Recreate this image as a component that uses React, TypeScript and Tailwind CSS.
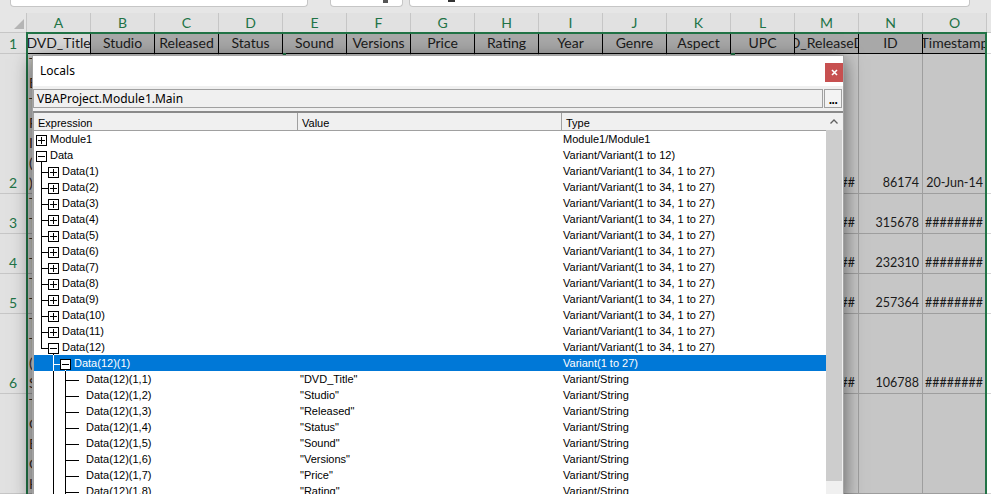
import React from "react";

const COLS = ["A","B","C","D","E","F","G","H","I","J","K","L","M","N","O"];
const HDR = ["DVD_Title","Studio","Released","Status","Sound","Versions","Price","Rating","Year","Genre","Aspect","UPC","DVD_ReleaseDate","ID","Timestamp"];

type SRow = { n: string; h: string; a: string[]; m?: string; nn?: string; o?: string; top?: boolean };
const SROWS: SRow[] = [
  { n: "2", h: "h-[140px]", a: ["The", "Easy", "The", "Fox", "In", "(2)", ")"], m: "########", nn: "86174", o: "20-Jun-14" },
  { n: "3", h: "h-[40px]", a: ["The", "The"], m: "########", nn: "315678", o: "########" },
  { n: "4", h: "h-[40px]", a: ["The", "The"], m: "########", nn: "232310", o: "########" },
  { n: "5", h: "h-[40px]", a: ["The", "The"], m: "########", nn: "257364", o: "########" },
  { n: "6", h: "h-[80px]", a: ["The", "The", "(S)", "So"], m: "########", nn: "106788", o: "########" },
  { n: "", h: "h-[100px]", a: ["The", "Cat", "Eve", "Cat", "Hi"], top: true },
];

type TRow = {
  level: number;
  box?: "plus" | "minus";
  below?: boolean;
  full: number[];
  top?: number;
  conn?: [number, number];
  expr: string;
  val?: string;
  type: string;
  sel?: boolean;
};

const NAMES = ["DVD_Title","Studio","Released","Status","Sound","Versions","Price","Rating"];
const TROWS: TRow[] = [
  { level: 0, box: "plus", full: [], expr: "Module1", type: "Module1/Module1" },
  { level: 0, box: "minus", below: true, full: [], expr: "Data", type: "Variant/Variant(1 to 12)" },
  ...Array.from({ length: 11 }, (_, i) => ({
    level: 1, box: "plus" as const, full: [7], conn: [7, 14] as [number, number],
    expr: `Data(${i + 1})`, type: "Variant/Variant(1 to 34, 1 to 27)",
  })),
  { level: 1, box: "minus", top: 7, conn: [7, 14], below: true, full: [], expr: "Data(12)", type: "Variant/Variant(1 to 34, 1 to 27)" },
  { level: 2, box: "minus", full: [19], conn: [19, 26], below: true, expr: "Data(12)(1)", type: "Variant(1 to 27)", sel: true },
  ...NAMES.map((nm, k) => ({
    level: 3, full: [19, 31], conn: [31, 45] as [number, number],
    expr: `Data(12)(1,${k + 1})`, val: `"${nm}"`, type: "Variant/String",
  })),
];

function Tree({ r }: { r: TRow }) {
  const L = r.level;
  const w = 16 + 12 * L;
  const lc = r.sel ? "#ffffff" : "#000000";
  return (
    <svg width={w} height={16} className="shrink-0" shapeRendering="crispEdges">
      {r.full.map((c) => (
        <line key={c} x1={c + 0.5} y1={0} x2={c + 0.5} y2={16} stroke={lc} />
      ))}
      {r.top !== undefined && <line x1={r.top + 0.5} y1={0} x2={r.top + 0.5} y2={10} stroke={lc} />}
      {r.conn && <line x1={r.conn[0]} y1={9.5} x2={r.conn[1]} y2={9.5} stroke={lc} />}
      {r.box && (
        <>
          <rect x={2.5 + 12 * L} y={4.5} width={10} height={10} fill="#ffffff" stroke="#000000" />
          <line x1={4 + 12 * L} y1={9.5} x2={11 + 12 * L} y2={9.5} stroke="#000000" />
          {r.box === "plus" && (
            <line x1={7.5 + 12 * L} y1={6} x2={7.5 + 12 * L} y2={13} stroke="#000000" />
          )}
          {r.below && <line x1={7.5 + 12 * L} y1={15} x2={7.5 + 12 * L} y2={16} stroke={lc} />}
        </>
      )}
    </svg>
  );
}

export default function App() {
  return (
    <div className="relative w-[991px] h-[494px] overflow-hidden bg-[#e6e6e6] font-['Lato',sans-serif]">
      {/* top strip */}
      <div className="h-[13px] flex items-start">
        <div className="ml-[10px] w-[298px] h-[7px] bg-white border border-t-0 border-[#c6c6c6] rounded-b-[4px]" />
        <div className="ml-[22px] w-[73px] h-[7px] bg-white border border-t-0 border-[#c6c6c6] rounded-b-[4px] flex items-start">
          <div className="ml-[52px] w-[5px] h-[3px] bg-[#555]" />
        </div>
        <div className="ml-[6px] w-[561px] h-[7px] bg-white border border-t-0 border-[#c6c6c6] rounded-b-[4px] flex items-start">
          <div className="ml-[38px] w-[7px] h-[2px] bg-[#333]" />
        </div>
      </div>

      {/* column header */}
      <div className="flex h-[20px]">
        <div className="w-[27px] shrink-0 border-r border-b border-[#c6c6c6] bg-[#e6e6e6] flex items-end justify-end pr-[2px] pb-[3px]">
          <svg width="10" height="10"><polygon points="10,0 10,10 0,10" fill="#b5b5b5" /></svg>
        </div>
        {COLS.map((c) => (
          <div key={c} className="w-[64px] shrink-0 border-r border-b border-[#c6c6c6] bg-[#e1e1e1] flex items-center justify-center text-[14px] leading-[18px] text-[#217346]">
            {c}
          </div>
        ))}
        <div className="flex-1 border-b border-[#c6c6c6] bg-[#e6e6e6]" />
      </div>

      {/* row 1 */}
      <div className="flex h-[21px]">
        <div className="w-[27px] shrink-0 border-r border-b border-[#c6c6c6] bg-[#e1e1e1] flex items-center justify-center text-[14px] text-[#217346]">1</div>
        {HDR.map((t, i) => (
          <div key={t} className={`w-[64px] shrink-0 border-r border-b border-black flex items-center justify-center overflow-hidden whitespace-nowrap text-[14px] leading-[18px] text-[#1a1a1a] ${i === 0 ? "bg-[#d9d9d9]" : "bg-[#a8a8a8]"}`}>
            <span className="shrink-0">{t}</span>
          </div>
        ))}
        <div className="flex-1 bg-white border-b border-[#d4d4d4]" />
      </div>

      {/* data rows */}
      {SROWS.map((r, ri) => (
        <div key={ri} className={`flex ${r.h}`}>
          <div className="w-[27px] shrink-0 border-r border-b border-[#c6c6c6] bg-[#e1e1e1] flex items-end justify-center text-[14px] leading-[20px] text-[#217346]">{r.n}</div>
          <div className={`w-[64px] shrink-0 border-r border-b border-[#9e9e9e] bg-[#c6c6c6] overflow-hidden flex flex-col ${r.top ? "justify-start" : "justify-end"} pl-[2px] text-[14px] leading-[20px] text-[#3a2a1a] whitespace-nowrap`}>
            {r.a.map((t, k) => (
              <span key={k}>{t}</span>
            ))}
          </div>
          {COLS.slice(1, 12).map((c) => (
            <div key={c} className="w-[64px] shrink-0 border-r border-b border-[#9e9e9e] bg-[#c6c6c6]" />
          ))}
          <div className="w-[64px] shrink-0 border-r border-b border-[#9e9e9e] bg-[#c6c6c6] flex items-end justify-end pr-[3px] pb-[1px] text-[12.5px] leading-[18px] text-[#1a1a1a] overflow-hidden whitespace-nowrap">{r.m}</div>
          <div className="w-[64px] shrink-0 border-r border-b border-[#9e9e9e] bg-[#c6c6c6] flex items-end justify-end pr-[3px] pb-[1px] text-[12.5px] leading-[18px] text-[#1a1a1a]">{r.nn}</div>
          <div className="w-[64px] shrink-0 border-r border-b border-[#9e9e9e] bg-[#c6c6c6] flex items-end justify-end pr-[3px] pb-[1px] text-[12.5px] leading-[18px] text-[#1a1a1a] overflow-hidden whitespace-nowrap">{r.o}</div>
          <div className="flex-1 bg-white border-b border-[#d4d4d4]" />
        </div>
      ))}

      {/* selection border */}
      <div className="absolute left-[26px] top-[32px] w-[961px] h-[470px] border-2 border-[#217346] pointer-events-none" />
      <div className="absolute left-[283px] top-[53px] w-[3px] h-[2px] bg-[#217346]" />
      <div className="absolute left-[731px] top-[53px] w-[4px] h-[2px] bg-[#217346]" />

      {/* Locals window */}
      <div className="absolute left-[32px] top-[55px] w-[812px] h-[445px] border border-[#a3a3a3] bg-[#f0f0f0] shadow-[0_4px_18px_rgba(0,0,0,0.55)] flex flex-col">
        <div className="h-[30px] shrink-0 bg-white flex items-start justify-between">
          <span className="ml-[7px] mt-[7px] text-[12px] leading-[16px] text-black font-['Noto_Sans',sans-serif]">Locals</span>
          <div className="mt-[7px] w-[18px] h-[19px] bg-[#c75050] flex items-center justify-center">
            <svg width="7" height="7" viewBox="0 0 7 7">
              <path d="M1 1 L6 6 M6 1 L1 6" stroke="#ffffff" strokeWidth="1.6" />
            </svg>
          </div>
        </div>

        <div className="mt-[3px] flex h-[19px] shrink-0">
          <div className="flex-1 border border-[#a0a0a0] bg-[#f0f0f0] flex items-center pl-[3px] text-[12px] leading-[16px] text-black font-['Noto_Sans',sans-serif]">
            VBAProject.Module1.Main
          </div>
          <div className="ml-[1px] mr-[1px] w-[18px] border border-[#a0a0a0] bg-[#f3f3f3] flex items-end justify-center pb-[2px]">
            <span className="text-[12px] leading-[10px] font-bold text-black font-['Liberation_Sans',sans-serif] tracking-[-0.5px]">...</span>
          </div>
        </div>

        <div className="mt-[3px] flex-1 min-h-0 flex border-t-2 border-[#8a8a8a] font-['Liberation_Sans',Arial,sans-serif] text-[11px]">
          <div className="w-[793px] shrink-0 border-l border-[#a0a0a0] bg-white flex flex-col overflow-hidden">
            <div className="flex h-[18px] shrink-0 bg-[#f0f0f0] border-b border-[#a0a0a0] text-black leading-[16px]">
              <div className="w-[264px] shrink-0 border-r border-[#a0a0a0] pl-[4px] pt-[2px]">Expression</div>
              <div className="w-[264px] shrink-0 border-r border-[#a0a0a0] pl-[4px] pt-[2px]">Value</div>
              <div className="flex-1 pl-[4px] pt-[2px]">Type</div>
            </div>
            {TROWS.map((r, i) => (
              <div key={i} className={`flex h-[16px] shrink-0 leading-[16px] whitespace-nowrap ${r.sel ? "bg-[#0078d7] text-white" : "text-black"}`}>
                <div className="w-[264px] shrink-0 flex items-center">
                  <Tree r={r} />
                  <span>{r.expr}</span>
                </div>
                <div className="w-[264px] shrink-0 pl-[2px]">{r.val ?? ""}</div>
                <div className="flex-1 pl-[1px]">{r.type}</div>
              </div>
            ))}
          </div>
          <div className="w-[16px] shrink-0 mr-[1px] flex flex-col">
            <div className="h-[17px] shrink-0 bg-[#f0f0f0] flex items-center justify-center">
              <svg width="8" height="5" viewBox="0 0 8 5">
                <path d="M0.5 4.5 L4 1 L7.5 4.5" fill="none" stroke="#606060" strokeWidth="1.3" />
              </svg>
            </div>
            <div className="h-[351px] shrink-0 bg-[#cdcdcd]" />
            <div className="flex-1 bg-[#f0f0f0]" />
          </div>
        </div>
      </div>
    </div>
  );
}
